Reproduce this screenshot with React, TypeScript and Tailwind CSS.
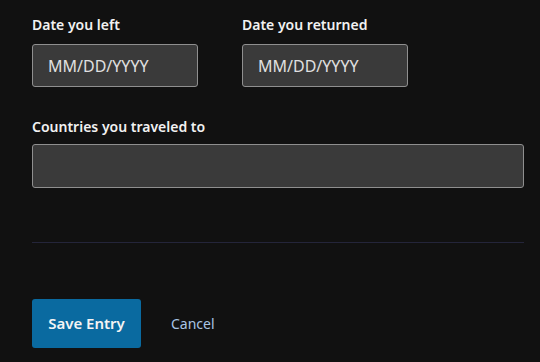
import React from "react";

export default function App() {
  const font = { fontFamily: "'Noto Sans', 'Open Sans', sans-serif" };
  return (
    <div className="w-[540px] h-[362px] bg-[#111111] text-white overflow-hidden" style={font}>
      <div className="pl-8 pr-4 pt-[15px]">
        <div className="flex gap-[44px]">
          <div className="flex flex-col">
            <label className="text-[14px] font-semibold leading-[20px] text-[#f2f2f2]">Date you left</label>
            <input
              placeholder="MM/DD/YYYY"
              className="mt-[9px] w-[166px] h-[43px] rounded-[3px] border border-[#8f8f8f] bg-[#3a3a3a] px-[15px] text-[16px] text-[#e6e6e6] placeholder:text-[#e0e0e0] outline-none"
            />
          </div>
          <div className="flex flex-col">
            <label className="text-[14px] font-semibold leading-[20px] text-[#f2f2f2]">Date you returned</label>
            <input
              placeholder="MM/DD/YYYY"
              className="mt-[9px] w-[166px] h-[43px] rounded-[3px] border border-[#8f8f8f] bg-[#3a3a3a] px-[15px] text-[16px] text-[#e6e6e6] placeholder:text-[#e0e0e0] outline-none"
            />
          </div>
        </div>
        <div className="mt-[30px] flex flex-col">
          <label className="text-[14px] font-semibold leading-[20px] text-[#f2f2f2]">Countries you traveled to</label>
          <input className="mt-[7px] w-[492px] h-[44px] rounded-[3px] border border-[#8f8f8f] bg-[#3a3a3a] outline-none" />
        </div>
        <div className="mt-[54px] w-[492px] h-[1px] bg-[#24253a]" />
        <div className="mt-[56px] flex items-center gap-[30px]">
          <button className="w-[109px] h-[49px] rounded-[3px] bg-[#0a6aa0] text-[15px] font-semibold text-[#f4f4f4]">
            Save Entry
          </button>
          <button className="text-[14px] text-[#a9c4e4]">Cancel</button>
        </div>
      </div>
    </div>
  );
}
